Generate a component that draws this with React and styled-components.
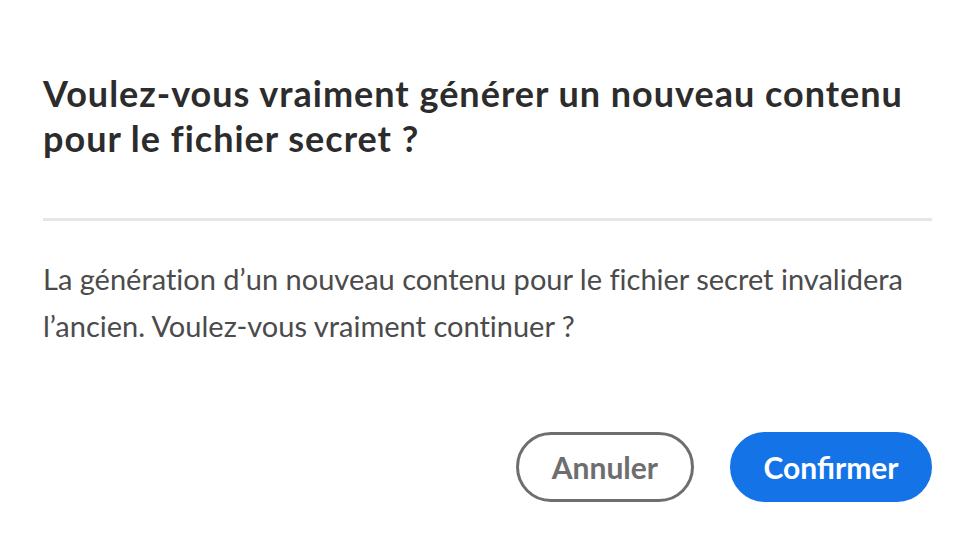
import React from "react";
import styled, { createGlobalStyle } from "styled-components";

const GlobalStyle = createGlobalStyle`
  html, body {
    margin: 0;
    padding: 0;
    background: #ffffff;
  }
  body {
    font-family: Lato, "Open Sans", sans-serif;
    font-variant-ligatures: none;
  }
`;

const Dialog = styled.section`
  width: 889px;
  padding: 71px 24px 0 43px;
  display: flex;
  flex-direction: column;
`;

const Heading = styled.h2`
  margin: 0;
  font-size: 36px;
  line-height: 45px;
  font-weight: 700;
  letter-spacing: 1px;
  color: #2c2c2c;
`;

const Divider = styled.hr`
  margin: 57px 0 0;
  border: 0;
  height: 3px;
  background: #e6e6e6;
`;

const Body = styled.p`
  margin: 34px 0 0;
  font-size: 29px;
  line-height: 47px;
  font-weight: 400;
  color: #4b4b4b;
`;

const Actions = styled.div`
  margin-top: 83px;
  display: flex;
  justify-content: flex-end;
  gap: 36px;
`;

const Button = styled.button`
  height: 70px;
  padding: 0 ${(p) => (p.$primary ? "30.5px" : "33px")};
  border-radius: 35px;
  font-family: inherit;
  font-size: 30px;
  font-weight: 700;
  cursor: pointer;
  border: 3px solid ${(p) => (p.$primary ? "#1473e6" : "#6e6e6e")};
  background: ${(p) => (p.$primary ? "#1473e6" : "#ffffff")};
  color: ${(p) => (p.$primary ? "#ffffff" : "#6e6e6e")};
`;

export default function App() {
  return (
    <>
      <GlobalStyle />
      <Dialog>
        <Heading>
          Voulez-vous vraiment générer un nouveau contenu pour le fichier secret ?
        </Heading>
        <Divider />
        <Body>
          La génération d’un nouveau contenu pour le fichier secret invalidera
          l’ancien. Voulez-vous vraiment continuer ?
        </Body>
        <Actions>
          <Button>Annuler</Button>
          <Button $primary>Confirmer</Button>
        </Actions>
      </Dialog>
    </>
  );
}
